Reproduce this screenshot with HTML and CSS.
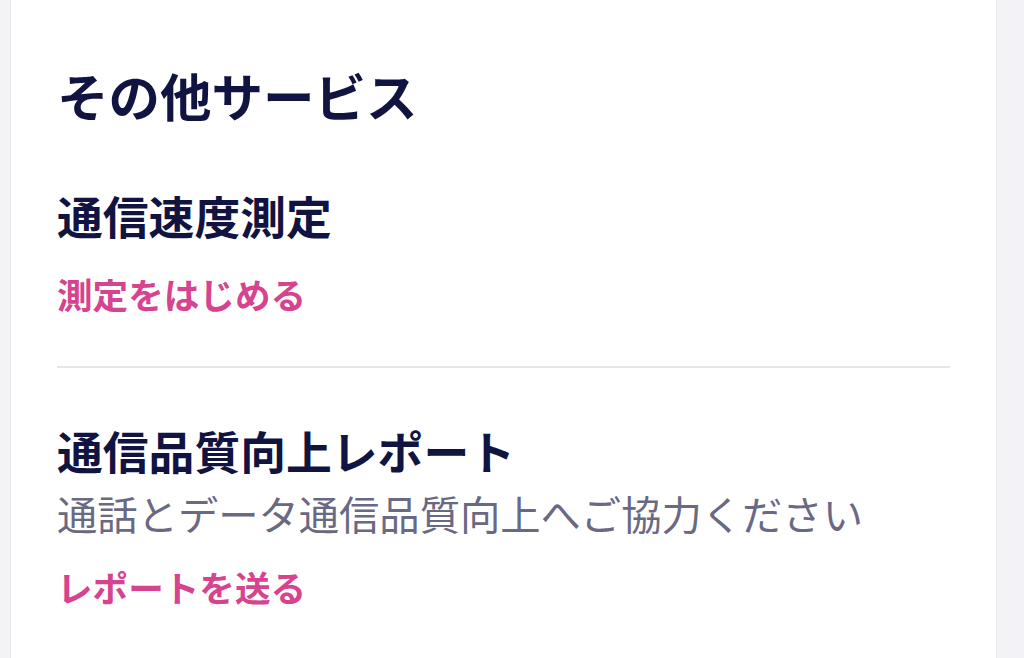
FILE: index.html
```html
<!DOCTYPE html>
<html lang="ja">
<head>
    <meta charset="UTF-8">
    <meta name="viewport" content="width=device-width, initial-scale=1.0">
    <title>その他サービス</title>
    <link rel="stylesheet" href="styles.css">
</head>
<body>
    <div class="page">
        <div class="card">
            <h1 class="card-title">その他サービス</h1>

            <div class="service">
                <h2 class="service-name">通信速度測定</h2>
                <a class="service-link" href="#">測定をはじめる</a>
            </div>

            <div class="service service-last">
                <h2 class="service-name">通信品質向上レポート</h2>
                <p class="service-desc">通話とデータ通信品質向上へご協力ください</p>
                <a class="service-link" href="#">レポートを送る</a>
            </div>
        </div>
    </div>
</body>
</html>
```

FILE: styles.css
```css
html, body {
    height: 100%;
}

body {
    margin: 0;
    background: #f3f2f7;
    font-family: "Noto Sans CJK JP", "Noto Sans", sans-serif;
    color: #111340;
    overflow: hidden;
}

.page {
    height: 100%;
    padding: 0 27px 0 10px;
}

.card {
    height: 100%;
    box-sizing: border-box;
    background: #fff;
    border-left: 1px solid #e8e7ee;
    border-right: 1px solid #e8e7ee;
    padding: 65px 46px 0;
}

.card-title {
    margin: 0;
    font-size: 51.5px;
    line-height: 60px;
    font-weight: 700;
}

.service {
    padding: 62px 0 50px;
    border-bottom: 2px solid #e6e5ec;
}

.service-last {
    padding-top: 54px;
    border-bottom: none;
}

.service-name {
    margin: 0;
    font-size: 45.8px;
    line-height: 56px;
    font-weight: 700;
}

.service-desc {
    margin: 10px 0 0;
    font-size: 40.3px;
    line-height: 50px;
    color: #6a6984;
}

.service-link {
    display: block;
    margin-top: 29px;
    font-size: 35.6px;
    line-height: 44px;
    font-weight: 700;
    color: #d6438e;
    text-decoration: none;
}

.service-last .service-link {
    margin-top: 27px;
}
```
